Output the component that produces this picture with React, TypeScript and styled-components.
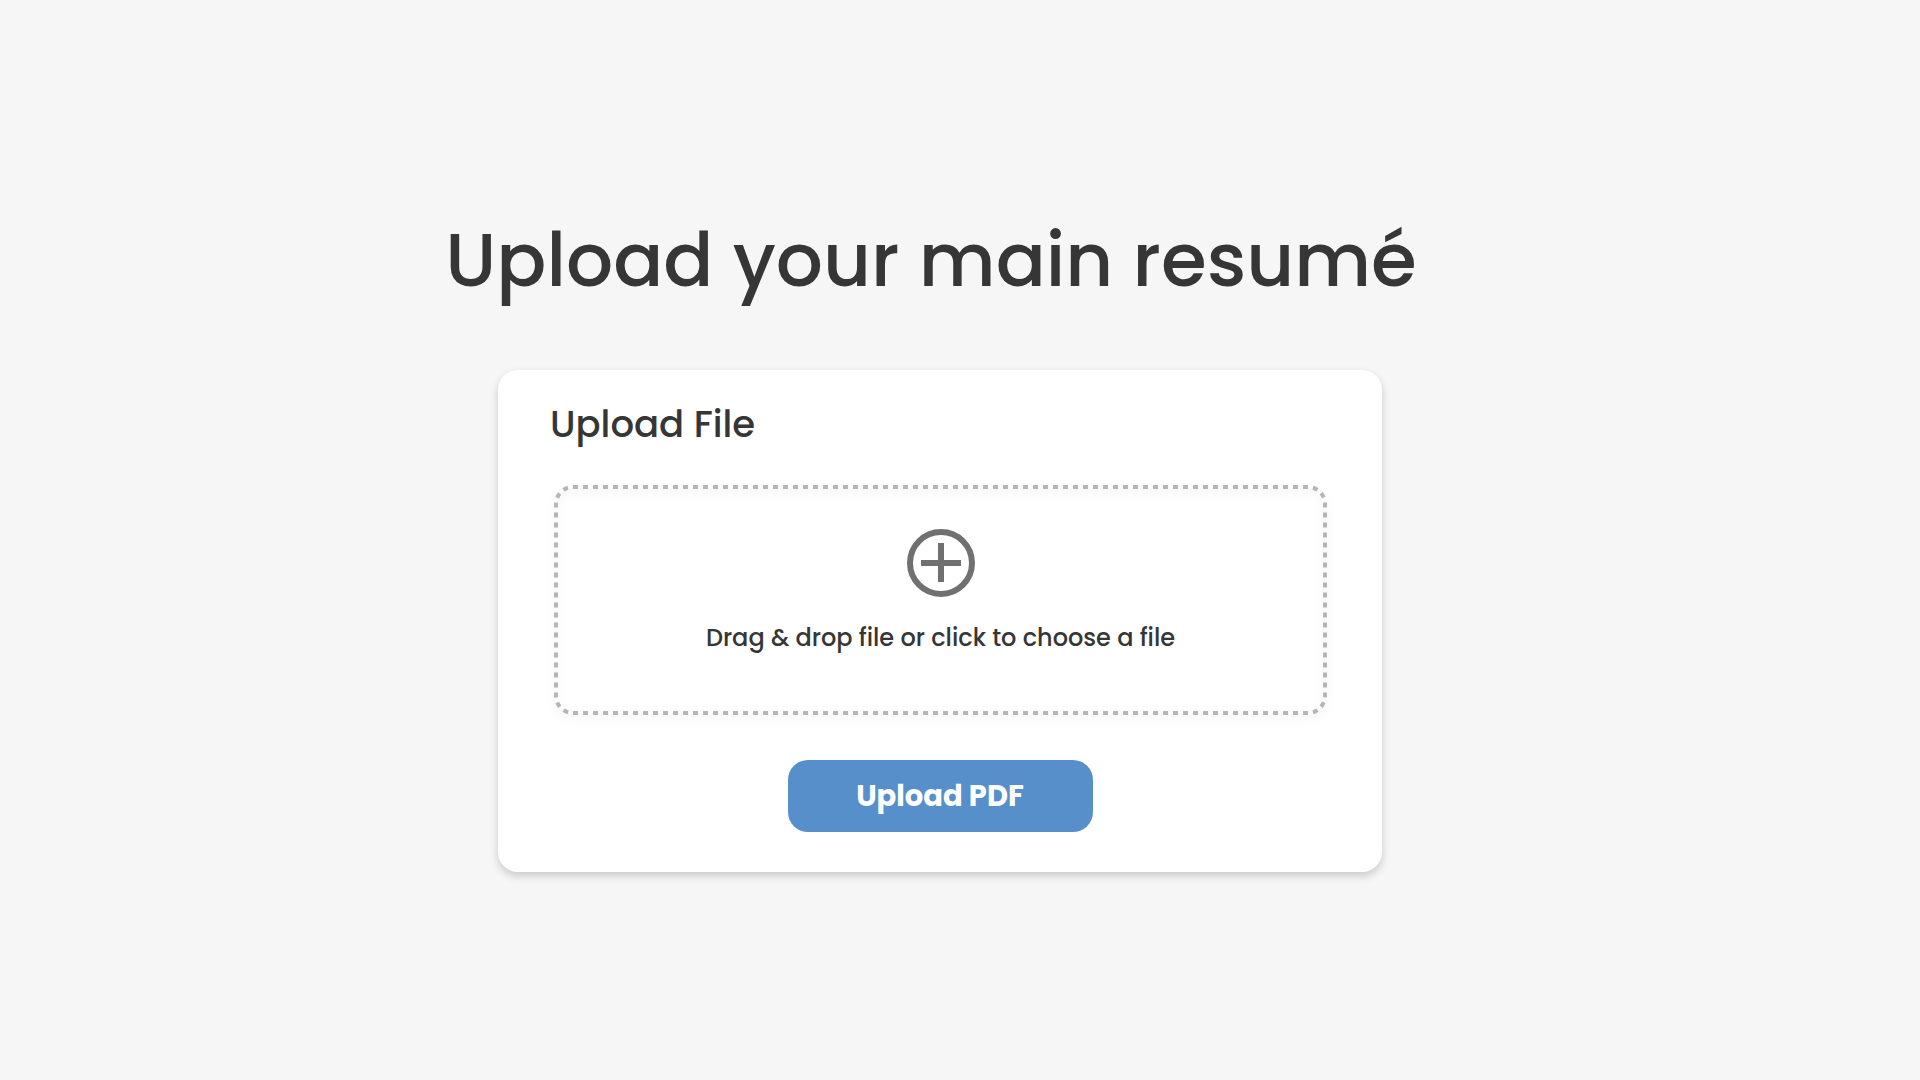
import React, { useState } from "react";
import styled, { createGlobalStyle } from "styled-components";

const GlobalStyle = createGlobalStyle`
  *, *::before, *::after { box-sizing: border-box; }
  body {
    margin: 0;
    background: #f6f6f6;
    color: #363636;
    font-family: Poppins, Inter, "Liberation Sans", sans-serif;
    font-weight: 500;
  }
`;

const Page = styled.main`
  min-height: 100vh;
  display: flex;
  flex-direction: column;
  align-items: center;
  justify-content: center;
  gap: 56px;
  padding: 0 40px 2px 0;
`;

const Title = styled.h1`
  margin: 0;
  padding-right: 18px;
  font-size: 74px;
  line-height: 108px;
  font-weight: 500;
  text-align: center;
`;

const Card = styled.form`
  width: 100%;
  max-width: 884px;
  display: flex;
  flex-direction: column;
  align-items: center;
  padding: 28px 52px 40px;
  border-radius: 20px;
  background: #fff;
  box-shadow: 0 4px 8px rgba(0, 0, 0, 0.18);
`;

const CardTitle = styled.h2`
  align-self: stretch;
  margin: 0 0 35px;
  font-size: 37px;
  line-height: 52px;
  font-weight: 500;
`;

const DropZone = styled.label`
  position: relative;
  align-self: stretch;
  min-height: 230px;
  display: flex;
  flex-direction: column;
  align-items: center;
  gap: 23px;
  padding-top: 44px;
  margin: 0 3px 45px 4px;
  font-size: 24px;
  line-height: 36px;
  cursor: pointer;
`;

const FileInput = styled.input`
  position: absolute;
  inset: 0;
  width: 100%;
  height: 100%;
  opacity: 0;
  cursor: pointer;
`;

const DashedOutline = styled.svg`
  position: absolute;
  inset: 0;
  width: 100%;
  height: 100%;
  overflow: visible;
  pointer-events: none;
  filter: drop-shadow(0 4px 4px rgba(0, 0, 0, 0.1));

  rect {
    x: 2px;
    y: 2px;
    width: calc(100% - 4px);
    height: calc(100% - 4px);
    rx: 17px;
    fill: none;
    stroke: #b5b5b5;
    stroke-width: 4px;
    stroke-dasharray: 5 5;
  }
`;

const PlusIcon = styled.svg`
  width: 68px;
  height: 68px;
  fill: none;
  stroke: #707070;
  stroke-width: 6;
`;

const UploadButton = styled.button`
  min-width: 305px;
  height: 72px;
  border: 0;
  border-radius: 20px;
  background: #578fca;
  color: #fff;
  font: inherit;
  font-size: 29px;
  font-weight: 700;
  cursor: pointer;
`;

export default function App() {
  const [fileName, setFileName] = useState("");

  return (
    <>
      <GlobalStyle />
      <Page>
        <Title>Upload your main resumé</Title>
        <Card onSubmit={(event) => event.preventDefault()}>
          <CardTitle>Upload File</CardTitle>
          <DropZone htmlFor="resume-file">
            <FileInput
              id="resume-file"
              type="file"
              accept="application/pdf"
              onChange={(event) => setFileName(event.target.files?.[0]?.name ?? "")}
            />
            <DashedOutline aria-hidden="true">
              <rect />
            </DashedOutline>
            <PlusIcon viewBox="0 0 68 68" aria-hidden="true">
              <circle cx="34" cy="34" r="31" />
              <path d="M14 34h40M34 14v39" />
            </PlusIcon>
            <span>{fileName || "Drag & drop file or click to choose a file"}</span>
          </DropZone>
          <UploadButton type="submit">Upload PDF</UploadButton>
        </Card>
      </Page>
    </>
  );
}
